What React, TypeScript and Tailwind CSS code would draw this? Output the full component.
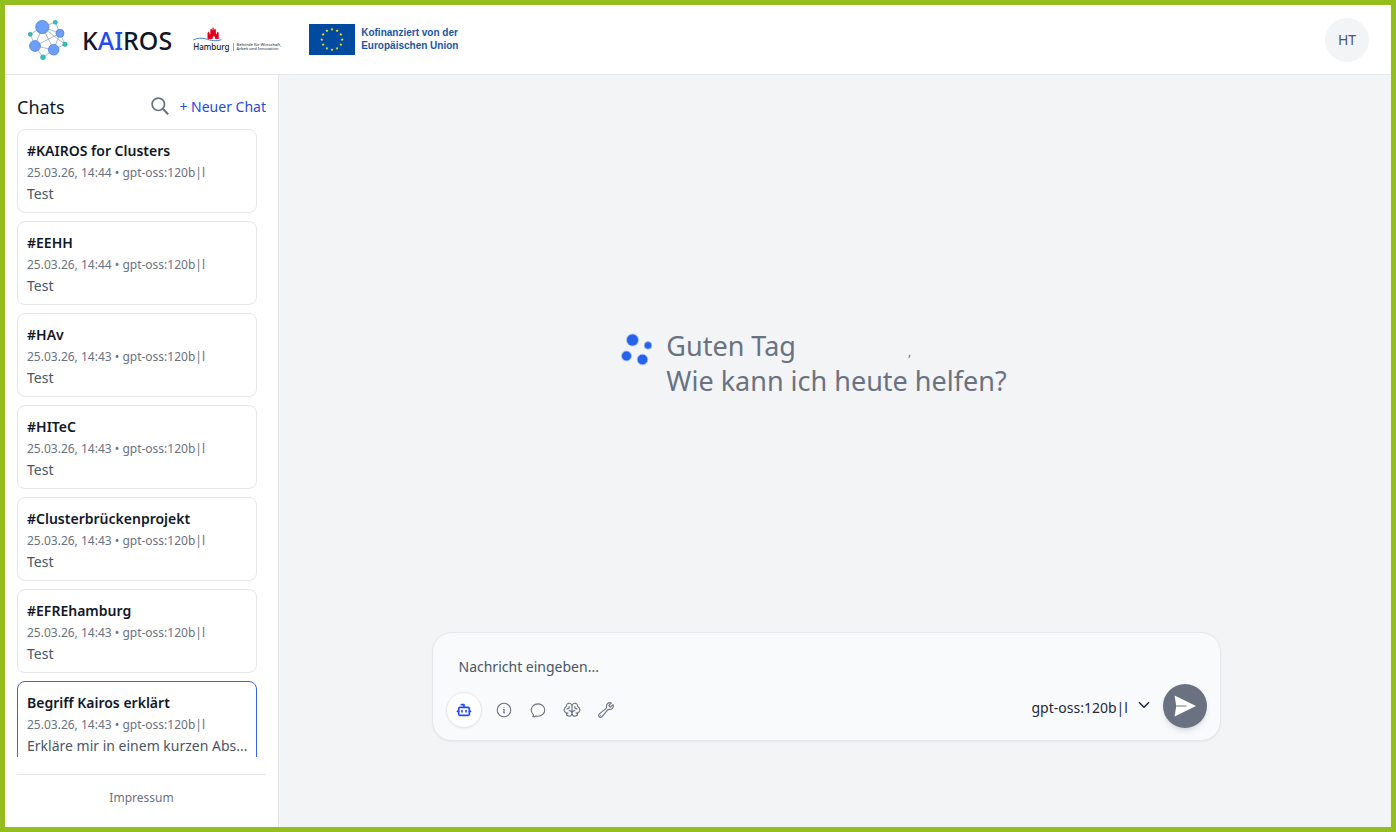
import { useState } from "react"
import { Bot, ChevronDown } from "lucide-react"
import { HiOutlineChatBubbleOvalLeft, HiOutlineInformationCircle, HiOutlineWrench } from "react-icons/hi2"
import { PiBrain } from "react-icons/pi"
import clsx from "clsx"

type Chat = {
  id: number
  title: string
  date: string
  preview: string
}

const MODEL = "gpt-oss:120b|l"

const chats: Chat[] = [
  { id: 1, title: "#KAIROS for Clusters", date: "25.03.26, 14:44", preview: "Test" },
  { id: 2, title: "#EEHH", date: "25.03.26, 14:44", preview: "Test" },
  { id: 3, title: "#HAv", date: "25.03.26, 14:43", preview: "Test" },
  { id: 4, title: "#HITeC", date: "25.03.26, 14:43", preview: "Test" },
  { id: 5, title: "#Clusterbrückenprojekt", date: "25.03.26, 14:43", preview: "Test" },
  { id: 6, title: "#EFREhamburg", date: "25.03.26, 14:43", preview: "Test" },
  { id: 7, title: "Begriff Kairos erklärt", date: "25.03.26, 14:43", preview: "Erkläre mir in einem kurzen Abs..." },
]

const tools = [
  { label: "Informationen", icon: HiOutlineInformationCircle },
  { label: "Chat", icon: HiOutlineChatBubbleOvalLeft },
  { label: "Wissen", icon: PiBrain },
  { label: "Werkzeuge", icon: HiOutlineWrench },
]

function KairosLogo() {
  return (
    <svg className="h-[43px] w-10" viewBox="28 17 40 43" fill="none" aria-hidden="true">
      <g stroke="#94a9cc" strokeWidth="0.8">
        <path d="M42.3 26 60 32.3 53.7 48.7 35 45zM42.3 26 53.7 48.7M35 45 60 32.3" />
        <path d="M42.3 26 55.3 21.3 60 32.3 65 43.3 53.7 48.7 43 56.3 35 45 30.3 33.3z" />
        <path d="M42.3 26 65 43.3" />
      </g>
      <g fill="#6c9ffb" stroke="#5580c8" strokeWidth="0.8">
        <circle cx="42.3" cy="26" r="6.6" />
        <circle cx="60" cy="32.3" r="4" />
        <circle cx="35" cy="45" r="5.4" />
        <circle cx="53.7" cy="48.7" r="5.3" />
      </g>
      <g fill="#2cc4bd" stroke="#259a9a" strokeWidth="0.6">
        <circle cx="55.3" cy="21.3" r="2" />
        <circle cx="30.3" cy="33.3" r="2" />
        <circle cx="65" cy="43.3" r="2.2" />
        <circle cx="43" cy="56.3" r="2.4" />
      </g>
    </svg>
  )
}

function HamburgLogo() {
  return (
    <div className="w-[90px]">
      <svg className="h-[15px] w-[30px]" viewBox="193 26 30 15" fill="none" aria-hidden="true">
        <path
          fill="#e2001a"
          d="M207.5 38v-6l1-1.5 1 1.5v1.2h.8v-4.5l.9-1.2.8 1.2v.6h.4v-2l.7-1 .7 1v2h.4v-.6l.8-1.2.9 1.2v4.5h.8V32l1-1.5 1 1.5v6h-3.6v-1.6a1.2 1.2 0 0 0-2.4 0V38z"
        />
        <path stroke="#3f87c8" strokeWidth="1" d="M193.3 38.8c4-1.8 8.2-2 12.5-.9 5 1.5 9.5 2.8 15.5.8" />
      </svg>
      <div className="flex items-center gap-[3px]">
        <span className="text-[8px] leading-[10px] font-medium text-gray-900">Hamburg</span>
        <span className="border-l border-gray-400 pl-[3px] text-[4px] leading-[4px] font-medium whitespace-nowrap text-gray-700">
          Behörde für Wirtschaft,
          <br />
          Arbeit und Innovation
        </span>
      </div>
    </div>
  )
}

function EuLogo() {
  const stars = Array.from({ length: 12 }, (_, i) => {
    const angle = (i * Math.PI) / 6
    return { x: 23 + 10.2 * Math.sin(angle), y: 15.5 - 10.2 * Math.cos(angle) }
  })

  return (
    <div className="flex items-start gap-1.5">
      <svg className="h-[31px] w-[46px]" viewBox="0 0 46 31" aria-hidden="true">
        <rect width="46" height="31" fill="#004a9f" />
        {stars.map((star, i) => (
          <path
            key={i}
            transform={`translate(${star.x} ${star.y})`}
            fill="#f5e11b"
            d="M0-1.7.45-.55 1.6-.5.7.25 1 1.4 0 .75-1 1.4-.7.25-1.6-.5-.45-.55z"
          />
        ))}
      </svg>
      <span className="pt-0.5 font-['Liberation_Sans',sans-serif] text-[10px] leading-[13px] font-bold whitespace-nowrap text-[#1557a6]">
        Kofinanziert von der
        <br />
        Europäischen Union
      </span>
    </div>
  )
}

function Header() {
  return (
    <header className="flex h-[70px] shrink-0 items-center border-b border-gray-200 bg-white pr-[22px] pl-[23px]">
      <KairosLogo />
      <span className="ml-[14px] text-[25px] leading-8 font-medium text-slate-900">
        K<span className="text-[#1f4bf0]">AI</span>ROS
      </span>
      <div className="ml-[21px]">
        <HamburgLogo />
      </div>
      <div className="ml-[26px]">
        <EuLogo />
      </div>
      <button
        type="button"
        aria-label="Benutzerkonto"
        className="ml-auto size-11 rounded-full bg-gray-100 text-sm text-gray-600"
      >
        HT
      </button>
    </header>
  )
}

function ChatCard({ chat, active, onSelect }: { chat: Chat; active: boolean; onSelect: () => void }) {
  return (
    <button
      type="button"
      onClick={onSelect}
      className={clsx(
        "block w-full shrink-0 rounded-lg border bg-white px-[9px] pt-[9px] pb-[7px] text-left",
        active ? "border-[#3b63e6]" : "border-gray-200",
      )}
    >
      <span className="block truncate text-sm leading-6 font-semibold text-slate-900">{chat.title}</span>
      <span className="block truncate text-xs leading-5 text-gray-500">
        {chat.date} • {MODEL}
      </span>
      <span className="block text-sm leading-[22px] whitespace-nowrap text-gray-600">{chat.preview}</span>
    </button>
  )
}

function Sidebar() {
  const [activeId, setActiveId] = useState(7)

  return (
    <aside className="flex w-[274px] shrink-0 flex-col border-r border-gray-200 bg-white px-3 pt-5">
      <div className="mb-2.5 flex h-6 items-center">
        <h2 className="text-lg text-slate-900">Chats</h2>
        <button type="button" aria-label="Chats durchsuchen" className="ml-auto pb-0.5 text-gray-500">
          <svg className="size-[18px]" viewBox="0 0 18 18" fill="none" stroke="currentColor" strokeWidth="1.7">
            <circle cx="7.3" cy="7.3" r="6.2" />
            <path d="m11.8 11.8 5.4 5.4" strokeWidth="2" />
          </svg>
        </button>
        <button type="button" className="ml-2.5 text-sm whitespace-nowrap text-[#1f4bdf]">
          + Neuer Chat
        </button>
      </div>
      <div className="mb-[17px] flex min-h-0 flex-1 flex-col gap-2 overflow-hidden pr-[9px]">
        {chats.map((chat) => (
          <ChatCard key={chat.id} chat={chat} active={chat.id === activeId} onSelect={() => setActiveId(chat.id)} />
        ))}
      </div>
      <footer className="border-t border-gray-200 pt-[13px] pb-[19px] text-center text-xs leading-5">
        <a href="#impressum" className="text-gray-500">
          Impressum
        </a>
      </footer>
    </aside>
  )
}

function Greeting() {
  return (
    <div className="flex items-start gap-[14px]">
      <svg className="mt-[5px] h-[33px] w-[31px]" viewBox="0 0 31 33" aria-hidden="true">
        <g fill="#2563eb" stroke="#a9c3f7" strokeWidth="0.8">
          <circle cx="11.5" cy="7" r="6" />
          <circle cx="27" cy="12.4" r="3.8" />
          <circle cx="5.5" cy="23" r="5" />
          <circle cx="21.5" cy="26.5" r="5.3" />
        </g>
      </svg>
      <h1 className="text-[27px] leading-[35px] text-gray-500">
        Guten Tag
        <span className="ml-28 text-xs">,</span>
        <br />
        Wie kann ich heute helfen?
      </h1>
    </div>
  )
}

function Composer() {
  const [message, setMessage] = useState("")

  return (
    <form
      onSubmit={(e) => e.preventDefault()}
      className="w-full max-w-[789px] rounded-[20px] border border-gray-200 bg-gray-50 px-[13px] pt-[15px] pb-3 shadow-xs"
    >
      <input
        type="text"
        aria-label="Nachricht"
        placeholder="Nachricht eingeben..."
        value={message}
        onChange={(e) => setMessage(e.target.value)}
        className="block h-9 w-full px-[13px] text-sm text-gray-700 outline-none placeholder:text-gray-600"
      />
      <div className="flex items-end">
        <button
          type="button"
          aria-label="Assistent"
          className="mr-1.5 flex size-9 items-center justify-center rounded-full border border-gray-200 bg-white text-[#1f4bf0] shadow-xs"
        >
          <Bot className="size-4" strokeWidth={2.5} />
        </button>
        <div className="flex gap-0.5">
          {tools.map(({ label, icon: Icon }) => (
            <button
              key={label}
              type="button"
              aria-label={label}
              className="flex h-9 w-8 items-center justify-center text-gray-500"
            >
              <Icon className="size-[18px]" />
            </button>
          ))}
        </div>
        <div className="relative mr-2.5 mb-1 ml-auto flex items-center">
          <select
            aria-label="Modell"
            defaultValue={MODEL}
            className="h-8 appearance-none bg-transparent pr-6 text-sm text-slate-800 outline-none"
          >
            <option value={MODEL}>{MODEL}</option>
          </select>
          <ChevronDown className="pointer-events-none absolute top-1 right-0 size-[18px] text-slate-800" />
        </div>
        <button
          type="submit"
          aria-label="Senden"
          className="flex size-11 items-center justify-center rounded-full bg-gray-500 shadow-md"
        >
          <svg className="size-[22px]" viewBox="0 0 22 22" fill="none" aria-hidden="true">
            <path fill="#fff" d="M.6.6 22 11 .6 21.6 2 12.5v-3z" />
            <path stroke="#6b7280" strokeWidth="1" d="M1.5 11h11" />
          </svg>
        </button>
      </div>
    </form>
  )
}

export default function App() {
  return (
    <div className="flex h-screen flex-col border-[5px] border-[#93be1e] bg-gray-100 font-['Noto_Sans',sans-serif]">
      <Header />
      <div className="flex min-h-0 flex-1">
        <Sidebar />
        <main className="flex min-w-0 flex-1 flex-col items-center pr-[18px] pb-[86px]">
          <div className="flex flex-1 items-center pt-[18px] pr-6">
            <Greeting />
          </div>
          <Composer />
        </main>
      </div>
    </div>
  )
}
